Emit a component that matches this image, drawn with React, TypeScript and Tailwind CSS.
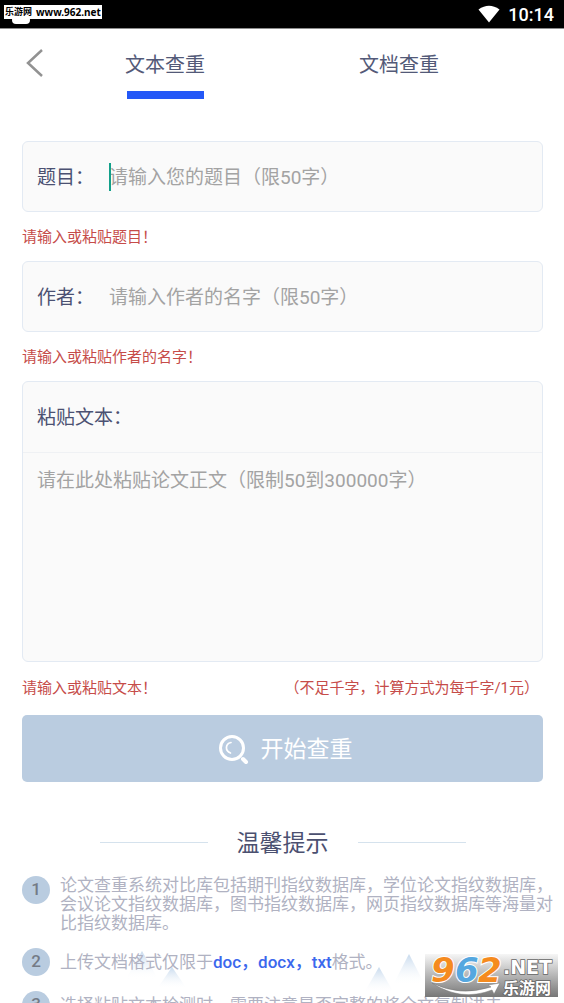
import React from "react";

function StatusBar() {
  return (
    <div className="relative flex h-7 shrink-0 items-center justify-end gap-2 bg-black pr-[10px] text-white">
      <span className="absolute left-3 top-4 h-2 w-[18px] rounded-sm bg-white" />
      <span className="absolute left-1 top-[5px] flex h-[14px] w-[98px] items-center gap-1 whitespace-nowrap bg-white pl-px text-black">
        <span className="text-[9px] font-bold leading-[14px]">乐游网</span>
        <span className="font-['Noto_Sans',sans-serif] text-[10px] font-bold leading-[14px]">www.962.net</span>
      </span>
      <svg width="22" height="18" viewBox="0 0 22 18" fill="white" aria-hidden="true">
        <path d="M0.5 4.5Q11 -3 21.5 4.5L11 17.5Z" />
      </svg>
      <span className="pt-px text-[18px] font-medium leading-7">10:14</span>
    </div>
  );
}

function Header() {
  return (
    <header className="flex h-[72px] shrink-0 items-start border-t border-[#8d8d8d] text-[20px] leading-7 text-[#535a78]">
      <button type="button" aria-label="返回" className="mt-5 ml-6 w-6">
        <svg width="22" height="30" viewBox="0 0 22 30" fill="none" stroke="#929292" strokeWidth="2.5" aria-hidden="true">
          <path d="M18 1L4 14L18 27" />
        </svg>
      </button>
      <nav className="mr-12 flex flex-1">
        <div className="flex flex-1 justify-center">
          <button type="button" className="mt-[22px] flex h-12 flex-col justify-between">
            文本查重
            <span className="h-2 w-[77px] self-center bg-[#2458f7]" />
          </button>
        </div>
        <div className="flex flex-1 justify-center">
          <button type="button" className="mt-[22px] flex h-12 flex-col justify-between">文档查重</button>
        </div>
      </nav>
    </header>
  );
}

function Field({ id, label, placeholder, error, caret }: { id: string; label: string; placeholder: string; error: string; caret?: boolean }) {
  return (
    <div>
      <div className="relative flex h-[71px] items-center rounded-md border border-[#e3eaf3] bg-[#fafafa] text-[19px]">
        <label htmlFor={id} className="w-[86px] shrink-0 pt-1 pl-[14px] text-[#4b5172]">{label}</label>
        {caret && <span className="absolute left-[86px] h-7 w-0.5 bg-[#13a08a]" />}
        <input id={id} type="text" placeholder={placeholder} className="h-10 min-w-0 flex-1 bg-transparent pt-0.5 outline-none placeholder:text-[#a3a3a3] placeholder:opacity-100" />
      </div>
      <p className="flex h-[49px] items-center pt-0.5 text-[15px] text-[#c64c49]">{error}</p>
    </div>
  );
}

function Tip({ n, children }: { n: number; children: React.ReactNode }) {
  return (
    <li className="flex gap-[10px]">
      <span className="flex size-7 shrink-0 items-center justify-center rounded-full bg-[#b9cce0] text-[17px] font-medium text-[#747b86]">{n}</span>
      <p className="min-w-0 flex-1 self-center text-[17px] leading-[19px] text-[#b0b2c2]">{children}</p>
    </li>
  );
}

const peaks = ["M142 8L158 36H126Z", "M172 24L187 46H157Z", "M379 24L394 50H364Z", "M409 11L425 42H393Z"];

function Mountains() {
  return (
    <svg className="absolute inset-x-0 bottom-0 h-[60px] w-full" viewBox="0 0 564 60" preserveAspectRatio="none" aria-hidden="true">
      <defs>
        <linearGradient id="peak" x1="0" y1="0" x2="0" y2="1">
          <stop offset="0" stopColor="#c6d9ed" />
          <stop offset="1" stopColor="#ffffff" stopOpacity="0" />
        </linearGradient>
      </defs>
      {peaks.map((d) => (
        <path key={d} d={d} fill="url(#peak)" />
      ))}
    </svg>
  );
}

function Watermark() {
  return (
    <svg className="absolute bottom-[6px] right-[6px]" width="133" height="43" viewBox="0 0 133 43" role="img" aria-label="962.NET 乐游网">
      <defs>
        <linearGradient id="plate" x1="0" y1="0" x2="0" y2="1">
          <stop offset="0" stopColor="#f6f6f6" />
          <stop offset="0.45" stopColor="#bcbcbc" />
          <stop offset="1" stopColor="#777777" />
        </linearGradient>
      </defs>
      <rect width="133" height="43" fill="url(#plate)" />
      <path d="M7 29Q35 43 66 33L63 31L75 29L69 40L67 36Q36 48 7 29Z" fill="white" stroke="#777" strokeWidth="0.5" />
      <g fontFamily="DejaVu Sans, sans-serif" fontWeight="bold" fontStyle="italic" fontSize="34" stroke="white" strokeWidth="2" paintOrder="stroke">
        <text x="6" y="28" fill="#f58b1f">9</text>
        <text x="30" y="28" fill="#55a7df">6</text>
        <text x="53" y="28" fill="#f58b1f">2</text>
      </g>
      <g fill="white" stroke="#666" strokeWidth="1.5" paintOrder="stroke" fontWeight="bold">
        <text x="78" y="20" fontSize="19" fontFamily="DejaVu Sans, sans-serif">.NET</text>
        <text x="78" y="40" fontSize="16" fontFamily="Noto Sans CJK SC, sans-serif">乐游网</text>
      </g>
    </svg>
  );
}

export default function App() {
  return (
    <div lang="zh-CN" className="relative flex h-screen flex-col overflow-hidden bg-white font-['Roboto','Noto_Sans_CJK_SC',sans-serif]">
      <StatusBar />
      <Header />
      <Mountains />
      <main className="relative flex-1 pt-[41px] pr-[21px] pl-[22px]">
        <Field id="title" label="题目：" placeholder="请输入您的题目（限50字）" error="请输入或粘贴题目！" caret />
        <Field id="author" label="作者：" placeholder="请输入作者的名字（限50字）" error="请输入或粘贴作者的名字！" />
        <div className="flex h-[281px] flex-col overflow-hidden rounded-md border border-[#e3eaf3] bg-[#fafafa] text-[19px]">
          <label htmlFor="body" className="flex h-[71px] shrink-0 items-center border-b border-[#eff1f4] pt-0.5 pl-[14px] text-[#4b5172]">粘贴文本：</label>
          <textarea id="body" placeholder="请在此处粘贴论文正文（限制50到300000字）" className="flex-1 resize-none bg-transparent px-[14px] py-[14px] leading-7 outline-none placeholder:text-[#a3a3a3] placeholder:opacity-100" />
        </div>
        <div className="flex h-[53px] items-center justify-between whitespace-nowrap pr-1 text-[15px] text-[#c64c49]">
          <p>请输入或粘贴文本！</p>
          <p>（不足千字，计算方式为每千字/1元）</p>
        </div>
        <button type="button" className="flex h-[67px] w-full items-center justify-center gap-3 rounded-[5px] bg-[#bacce0] pl-1 text-[23px] text-white">
          <svg width="32" height="32" viewBox="0 0 32 32" fill="none" stroke="white" strokeLinecap="round" aria-hidden="true">
            <circle cx="15" cy="15" r="11.5" strokeWidth="3" />
            <path d="M14 9.5C8 11 8 18 13.5 20" strokeWidth="1.7" />
            <path d="M26 26L29 29" strokeWidth="4" />
          </svg>
          <span className="pt-1">开始查重</span>
        </button>
        <h2 className="mt-[42px] flex h-9 items-center justify-center gap-[29px] text-[23px] text-[#4b5070]">
          <span className="h-px w-[108px] bg-[#d5e2ed]" />
          <span className="pt-1">温馨提示</span>
          <span className="h-px w-[108px] bg-[#d5e2ed]" />
        </h2>
        <ol className="-mr-3 mt-4 flex flex-col gap-[15px]">
          <Tip n={1}>论文查重系统对比库包括期刊指纹数据库，学位论文指纹数据库，会议论文指纹数据库，图书指纹数据库，网页指纹数据库等海量对比指纹数据库。</Tip>
          <Tip n={2}>上传文档格式仅限于<span className="font-medium text-[#3b68ed]">doc，docx，txt</span>格式。</Tip>
          <Tip n={3}>选择粘贴文本检测时，需要注意是否完整的将全文复制进去</Tip>
        </ol>
      </main>
      <Watermark />
    </div>
  );
}
